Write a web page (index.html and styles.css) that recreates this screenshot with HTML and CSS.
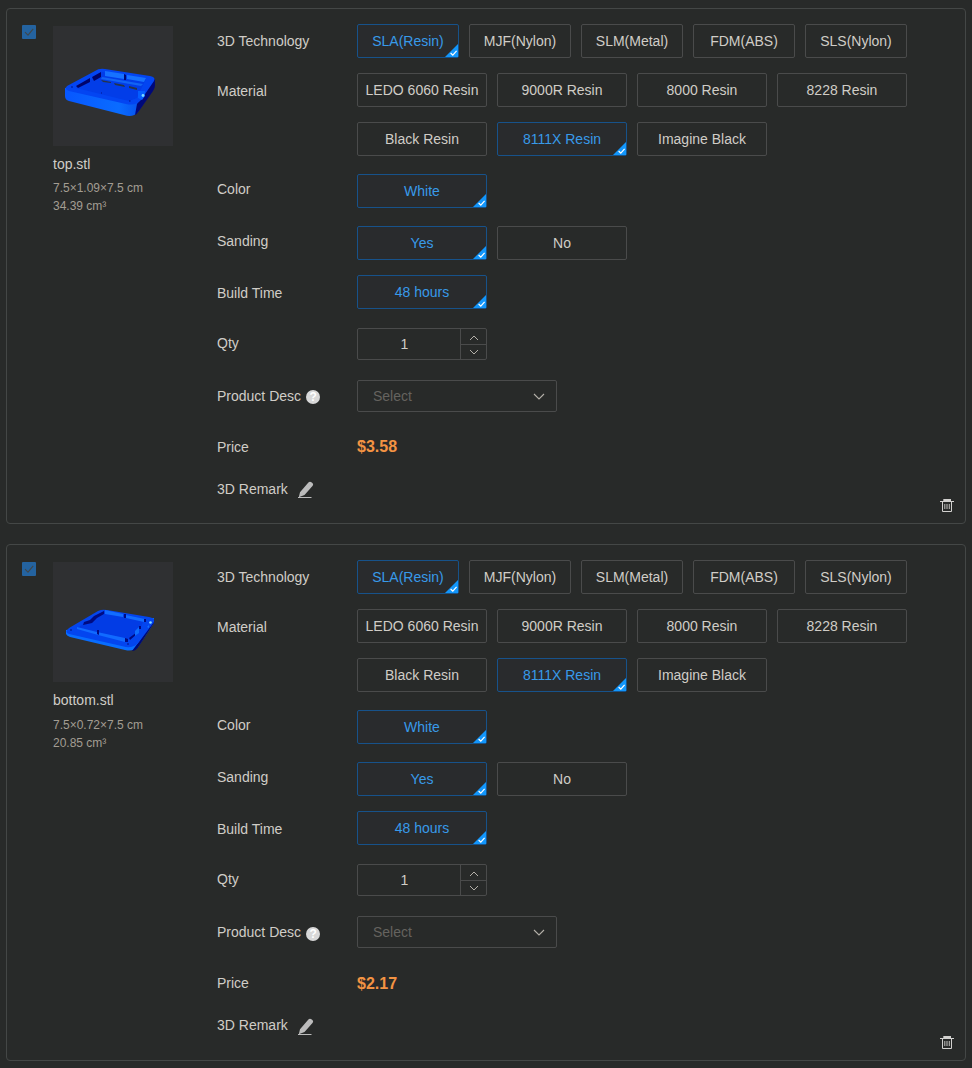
FILE: index.html
```html
<!DOCTYPE html>
<html lang="en">
<head>
<meta charset="utf-8">
<title>3D Printing Files</title>
<link rel="stylesheet" href="styles.css">
</head>
<body>
<svg class="sprite" width="0" height="0" aria-hidden="true">
  <defs>
    <linearGradient id="front" x1="0" x2="1"><stop offset="0" stop-color="#0757ff"/><stop offset=".6" stop-color="#0a6cff"/><stop offset=".8" stop-color="#0756f0"/><stop offset="1" stop-color="#000a82"/></linearGradient>
  </defs>
  <symbol id="check" viewBox="0 0 14 14"><path d="M3 7.2l3 2.9 5.2-6.2" fill="none" stroke="#40474b" stroke-width="1.1"/></symbol>
  <symbol id="corner" viewBox="0 0 13 13"><path d="M13 0v13H0z" fill="#1296fb"/><path d="M5.6 9l2.2 2.1 3.8-4.2" fill="none" stroke="#fff" stroke-width="1.2"/></symbol>
  <symbol id="up" viewBox="0 0 10 6"><path d="M1 5l4-4 4 4" fill="none" stroke="#b4b0a9"/></symbol>
  <symbol id="down" viewBox="0 0 12 7"><path d="M1 1l5 5 5-5" fill="none" stroke="#b4b0a9" stroke-width="1.1"/></symbol>
  <symbol id="pencil" viewBox="0 0 16 18"><path d="M10.4 1.6Q11.6.1 13 1L14.4 2.1Q15.8 3.2 14.7 4.7L6.5 14 .8 16.2 2 11.3z" fill="#bcbcbc"/><path d="M0 16.5h13.5" stroke="#bcbcbc"/></symbol>
  <symbol id="trash" viewBox="0 0 14 14"><path d="M3.3 0h7.7v2h3v1H0V2h3.3z" fill="#d2d1cf"/><path d="M2.5 3v9.5h9V3" fill="none" stroke="#d2d1cf"/><path d="M4.8 5v5M7 5v5M9.3 5v5" stroke="#d2d1cf" stroke-width=".9"/></symbol>
</svg>
<main class="list">
  <section class="card">
    <span class="checkbox"><svg><use href="#check"/></svg></span>
    <div class="file">
      <div class="thumb">
        <svg viewBox="0 0 120 120">
          <path d="M12 62V70Q12 74 16 75L71 89Q80 92 85 86L100 64Q102 62 102 53L60 50z" fill="url(#front)"/>
          <path d="M84 78L102 53V59Q102 62 100 65L86 85Q84 88 82 89z" fill="#00087a"/>
          <path d="M14 60L42 45Q46 42 52 43L97 50Q103 51 101 55L88 74Q83 80 73 78L16 65Q11 63 14 60z" fill="#0345f2"/>
          <path d="M23 62L49 46 93 53 88 63 84 72 76 75z" fill="#023de8"/>
          <path d="M23 60l14-8v4l-12 6zM39 51l9-5v5l-7 4z" fill="#00036a"/>
          <path d="M52 45l19 3v5l-19-3zM74 49l19 3-2 4-17-3z" fill="#1672ff"/>
          <path d="M49 51l41 7-2 2-40-7z" fill="#1264f4"/>
          <path d="M71 48l2 1v5h-2z" fill="#000b73"/>
          <path d="M48 54l10 2v1l-8-1zM61 57l10 2 1 2-10-2zM76 60l8 2v2l-8-2z" fill="#263448"/>
          <path d="M85 65h7v5l-3 4-4-2z" fill="#045dff"/><circle cx="90" cy="69.5" r="1.4" fill="#7edcff"/>
          <path d="M76 75h1.5M18 61h2M48 67h1" stroke="#00168e"/>
        </svg>
      </div>
      <div class="name">top.stl</div>
      <div class="meta">7.5×1.09×7.5 cm<br>34.39 cm³</div>
    </div>
    <div class="fields">
      <div class="row tech"><div class="label">3D Technology</div><div class="options narrow"><span class="opt on">SLA(Resin)<svg><use href="#corner"/></svg></span><span class="opt">MJF(Nylon)</span><span class="opt">SLM(Metal)</span><span class="opt">FDM(ABS)</span><span class="opt">SLS(Nylon)</span></div></div>
      <div class="row material"><div class="label">Material</div><div class="options"><span class="opt">LEDO 6060 Resin</span><span class="opt">9000R Resin</span><span class="opt">8000 Resin</span><span class="opt">8228 Resin</span><span class="opt">Black Resin</span><span class="opt on">8111X Resin<svg><use href="#corner"/></svg></span><span class="opt">Imagine Black</span></div></div>
      <div class="row color"><div class="label">Color</div><div class="options"><span class="opt on">White<svg><use href="#corner"/></svg></span></div></div>
      <div class="row sanding"><div class="label">Sanding</div><div class="options"><span class="opt on">Yes<svg><use href="#corner"/></svg></span><span class="opt">No</span></div></div>
      <div class="row build"><div class="label">Build Time</div><div class="options"><span class="opt on">48 hours<svg><use href="#corner"/></svg></span></div></div>
      <div class="row qty"><div class="label">Qty</div><div class="stepper"><span class="value">1</span><span class="steps"><span><svg><use href="#up"/></svg></span><span class="dec"><svg><use href="#up"/></svg></span></span></div></div>
      <div class="row desc"><div class="label">Product Desc <span class="help">?</span></div><div class="select">Select<svg><use href="#down"/></svg></div></div>
      <div class="row price"><div class="label">Price</div><div class="amount">$3.58</div></div>
      <div class="row remark"><div class="label">3D Remark</div><svg class="pencil"><use href="#pencil"/></svg></div>
    </div>
    <svg class="trash"><use href="#trash"/></svg>
  </section>

  <section class="card second">
    <span class="checkbox"><svg><use href="#check"/></svg></span>
    <div class="file">
      <div class="thumb">
        <svg viewBox="0 0 120 120">
          <path d="M13 68v4q1 2 4 3l55 13q8 2 13-3l16-24v-5z" fill="#086dff"/>
          <path d="M79 89q4 0 7-5l15-23v-4L85 81z" fill="#000a73"/>
          <path d="M16 66L45 49q4-2 9-1l42 7q6 1 5 5L86 80q-4 6-13 5L16 72q-5-2 0-6z" fill="#0345ef"/>
          <path d="M24 66l25-16 5-1 37 8-3 8-15 14z" fill="#023ce5"/>
          <path d="M24 65l20 5 28 6v4L45 73l-21-6z" fill="#116bff"/>
          <path d="M52 48l18 4v3l-18-3zM73 53l19 4-1 3-18-4z" fill="#126dff"/>
          <path d="M51 49v3l-7 4-5 5-9 2 1-3 6-2 4-4zM44 68h2v5l-2-1zM72 76l3 1v3h-3zM76 76l8-6v2l-7 6zM71 52h2v4h-2zM91 57h2v3h-2zM86 64h2v3h-2z" fill="#000b82"/>
          <path d="M82 69l4-4v6l-4 3zM94 65l2-2v3z" fill="#0e6eff"/>
          <path d="M74 82h2M17 68h2" stroke="#00127e"/>
          <circle cx="97.5" cy="60.5" r="1.3" fill="#8fdfff"/>
        </svg>
      </div>
      <div class="name">bottom.stl</div>
      <div class="meta">7.5×0.72×7.5 cm<br>20.85 cm³</div>
    </div>
    <div class="fields">
      <div class="row tech"><div class="label">3D Technology</div><div class="options narrow"><span class="opt on">SLA(Resin)<svg><use href="#corner"/></svg></span><span class="opt">MJF(Nylon)</span><span class="opt">SLM(Metal)</span><span class="opt">FDM(ABS)</span><span class="opt">SLS(Nylon)</span></div></div>
      <div class="row material"><div class="label">Material</div><div class="options"><span class="opt">LEDO 6060 Resin</span><span class="opt">9000R Resin</span><span class="opt">8000 Resin</span><span class="opt">8228 Resin</span><span class="opt">Black Resin</span><span class="opt on">8111X Resin<svg><use href="#corner"/></svg></span><span class="opt">Imagine Black</span></div></div>
      <div class="row color"><div class="label">Color</div><div class="options"><span class="opt on">White<svg><use href="#corner"/></svg></span></div></div>
      <div class="row sanding"><div class="label">Sanding</div><div class="options"><span class="opt on">Yes<svg><use href="#corner"/></svg></span><span class="opt">No</span></div></div>
      <div class="row build"><div class="label">Build Time</div><div class="options"><span class="opt on">48 hours<svg><use href="#corner"/></svg></span></div></div>
      <div class="row qty"><div class="label">Qty</div><div class="stepper"><span class="value">1</span><span class="steps"><span><svg><use href="#up"/></svg></span><span class="dec"><svg><use href="#up"/></svg></span></span></div></div>
      <div class="row desc"><div class="label">Product Desc <span class="help">?</span></div><div class="select">Select<svg><use href="#down"/></svg></div></div>
      <div class="row price"><div class="label">Price</div><div class="amount">$2.17</div></div>
      <div class="row remark"><div class="label">3D Remark</div><svg class="pencil"><use href="#pencil"/></svg></div>
    </div>
    <svg class="trash"><use href="#trash"/></svg>
  </section>
</main>
</body>
</html>
```
FILE: styles.css
```css
* { box-sizing: border-box; }
body {
  margin: 0;
  background: #282a29;
  color: #d0cdc7;
  font: 14px/20px "Liberation Sans", Arial, sans-serif;
}
svg { display: block; }
.sprite { position: absolute; }
.list {
  display: flex;
  flex-direction: column;
  gap: 20px;
  height: 1068px;
  padding: 8px 6px 0;
  overflow: hidden;
}
.card {
  display: flex;
  position: relative;
  flex: none;
  height: 516px;
  padding-left: 15px;
  border: 1px solid #444746;
  border-radius: 4px;
}
.second { height: 517px; }
.checkbox {
  width: 14px;
  height: 14px;
  margin: 16px 17px 0 0;
  border-radius: 1px;
  background: #2463a0;
}
.second .checkbox { margin-top: 17px; }
.checkbox svg { width: 14px; height: 14px; }
.file { width: 120px; margin: 17px 44px 0 0; }
.thumb { height: 120px; background: #2f3032; }
.name { margin-top: 8px; }
.meta { margin-top: 5px; color: #a39d93; font-size: 12px; line-height: 18px; }
.second .meta { margin-top: 6px; }

.fields { padding-top: 15px; }
.row { display: flex; }
.label { width: 140px; white-space: nowrap; }
.tech .label { padding-top: 7px; }
.material { margin-top: 15px; }
.material .label { padding-top: 8px; }
.color, .sanding { margin-top: 18px; }
.color .label, .sanding .label, .qty .label { padding-top: 5px; }
.build { margin-top: 15px; }
.build .label { padding-top: 8px; }
.qty { margin-top: 19px; }
.desc { margin-top: 20px; }
.desc .label { display: flex; gap: 5px; padding-top: 6px; }
.price { margin-top: 25px; }
.second .amount { padding-top: 1px; }
.remark { margin-top: 22px; }
.second .remark { margin-top: 21px; }
.remark .label { width: 81px; }

.options {
  display: grid;
  grid-template-columns: repeat(4, 130px);
  gap: 15px 10px;
}
.narrow { grid-template-columns: repeat(5, 102px); }
.opt {
  position: relative;
  height: 34px;
  border: 1px solid #4a4b4b;
  border-radius: 2px;
  line-height: 32px;
  text-align: center;
  white-space: nowrap;
}
.on { border-color: #17528a; background: #292b2d; color: #389ae9; }
.opt svg { position: absolute; right: 0; bottom: 0; width: 13px; height: 13px; }

.stepper {
  display: flex;
  width: 130px;
  height: 32px;
  border: 1px solid #4a4b4b;
  border-radius: 2px;
}
.value { width: 102px; padding-right: 9px; line-height: 30px; text-align: center; }
.steps { flex: 1; border-left: 1px solid #4a4b4b; }
.steps span { display: flex; height: 15px; align-items: center; justify-content: center; padding-top: 3px; }
.steps svg { width: 10px; height: 6px; }
.steps .dec { border-top: 1px solid #4a4b4b; padding-top: 0; }
.dec svg { transform: scaleY(-1); }

.help {
  width: 14px;
  height: 14px;
  margin-top: 4px;
  border-radius: 50%;
  background: #d8d8d8;
  color: #fff;
  font-size: 12px;
  font-weight: bold;
  line-height: 14px;
  text-align: center;
}
.second .help { margin-top: 5px; }
.select {
  display: flex;
  align-items: center;
  justify-content: space-between;
  width: 200px;
  height: 32px;
  padding: 0 11px 0 15px;
  border: 1px solid #4a4b4b;
  border-radius: 2px;
  color: #65635f;
}
.select svg { width: 12px; height: 7px; }
.amount { color: #f39343; font-size: 16px; font-weight: bold; }
.pencil { width: 16px; height: 18px; margin-top: 2px; }
.second .pencil { margin-top: 3px; }
.trash { position: absolute; right: 11px; bottom: 10px; width: 14px; height: 14px; }
```
